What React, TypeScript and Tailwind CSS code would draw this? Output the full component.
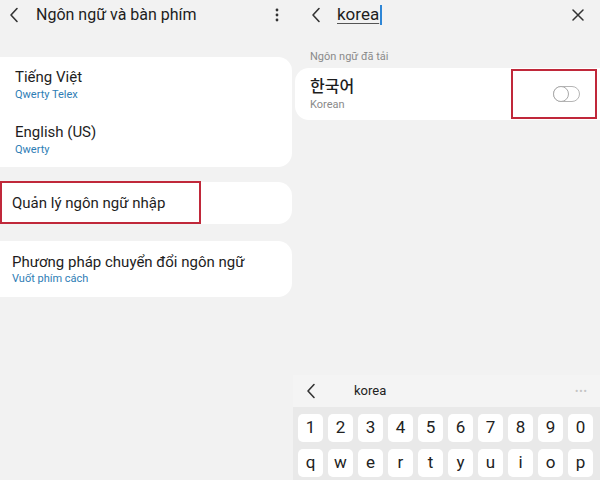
import React from 'react';

const font = { fontFamily: 'Roboto, "Noto Sans", "Noto Sans CJK KR", sans-serif' };

function Chevron({ className = '' }: { className?: string }) {
    return (
        <svg className={className} width="10" height="16" viewBox="0 0 10 16" fill="none" stroke="#333" strokeWidth="1.6" strokeLinecap="round" strokeLinejoin="round">
            <path d="M8 1.5L2 8l6 6.5" />
        </svg>
    );
}

function Toggle() {
    return (
        <div className="relative w-[27px] h-[16px] rounded-full border border-[#b5b5b5]">
            <div className="absolute -left-px -top-px w-[16px] h-[16px] rounded-full border border-[#a9a9a9] bg-white" />
        </div>
    );
}

const numbers = ['1', '2', '3', '4', '5', '6', '7', '8', '9', '0'];
const letters = ['q', 'w', 'e', 'r', 't', 'y', 'u', 'i', 'o', 'p'];

function Key({ label }: { label: string }) {
    return (
        <div className="w-[25px] h-[28px] rounded-[5px] bg-white flex items-center justify-center text-[17px] text-[#222]">
            {label}
        </div>
    );
}

export default function App() {
    return (
        <div className="w-[600px] h-[480px] bg-[#f2f2f2] flex overflow-hidden text-[#1d1d1d]" style={font}>
            {/* Left: language & keyboard settings */}
            <div className="w-[293px] flex flex-col">
                <div className="h-[30px] flex items-center pl-[9px] pr-[14px]">
                    <Chevron />
                    <span className="ml-[17px] text-[16px] flex-1">Ngôn ngữ và bàn phím</span>
                    <svg width="4" height="14" viewBox="0 0 4 14" fill="#333">
                        <circle cx="2" cy="2" r="1.4" />
                        <circle cx="2" cy="7" r="1.4" />
                        <circle cx="2" cy="12" r="1.4" />
                    </svg>
                </div>

                <div className="mt-[27px] w-[292px] bg-white rounded-r-[14px]">
                    <div className="h-[55px] pl-[15px] flex flex-col justify-center">
                        <span className="text-[15px] leading-[18px]">Tiếng Việt</span>
                        <span className="text-[11px] leading-[14px] text-[#2e7db5] mt-[2px]">Qwerty Telex</span>
                    </div>
                    <div className="h-[55px] pl-[15px] flex flex-col justify-center">
                        <span className="text-[15px] leading-[18px]">English (US)</span>
                        <span className="text-[11px] leading-[14px] text-[#2e7db5] mt-[2px]">Qwerty</span>
                    </div>
                </div>

                <div className="relative mt-[15px] w-[292px] h-[42px] bg-white rounded-r-[14px] pl-[12px] flex items-center">
                    <span className="text-[15px] mt-[1px]">Quản lý ngôn ngữ nhập</span>
                    <div className="absolute left-0 -top-px w-[201px] h-[43px] border-2 border-[#c0283a]" />
                </div>

                <div className="mt-[17px] w-[292px] h-[56px] bg-white rounded-r-[14px] pl-[12px] flex flex-col justify-center">
                    <span className="text-[15px] leading-[18px]">Phương pháp chuyển đổi ngôn ngữ</span>
                    <span className="text-[11px] leading-[14px] text-[#2e7db5] mt-[1px]">Vuốt phím cách</span>
                </div>
            </div>

            {/* Right: language search */}
            <div className="flex-1 flex flex-col">
                <div className="h-[30px] flex items-center pl-[18px] pr-[16px]">
                    <Chevron />
                    <div className="ml-[16px] flex-1 flex items-center">
                        <span className="text-[17px] underline underline-offset-[3px] decoration-[#555]">korea</span>
                        <span className="w-[1.5px] h-[20px] bg-[#2e86d6] ml-[1px]" />
                    </div>
                    <svg width="12" height="12" viewBox="0 0 12 12" stroke="#333" strokeWidth="1.5" strokeLinecap="round">
                        <path d="M1 1l10 10M11 1L1 11" />
                    </svg>
                </div>

                <div className="mt-[20px] pl-[17px] text-[11px] text-[#8a8a8a] h-[14px] leading-[14px]">Ngôn ngữ đã tải</div>

                <div className="relative mt-[4px] ml-[2px] h-[52px] bg-white rounded-l-[14px] pl-[15px] pr-[20px] flex items-center justify-between">
                    <div className="flex flex-col">
                        <span className="text-[16px] leading-[19px] font-medium">한국어</span>
                        <span className="text-[11px] leading-[14px] text-[#8a8a8a] mt-[2px]">Korean</span>
                    </div>
                    <Toggle />
                    <div className="absolute left-[216px] top-px w-[86px] h-[50px] border-2 border-[#c0283a]" />
                </div>

                <div className="flex-1" />

                <div className="h-[32px] bg-[#f4f4f4] flex items-center pl-[13px] pr-[12px]">
                    <Chevron />
                    <span className="ml-[38px] text-[13px] text-[#222] flex-1">korea</span>
                    <span className="text-[10px] text-[#c4c4c4] tracking-[1px]">•••</span>
                </div>
                <div className="h-[73px] bg-[#e9e9e9] pl-[5px] pt-[7px] flex flex-col gap-[7px]">
                    <div className="flex gap-[5px]">
                        {numbers.map((k) => <Key key={k} label={k} />)}
                    </div>
                    <div className="flex gap-[5px]">
                        {letters.map((k) => <Key key={k} label={k} />)}
                    </div>
                </div>
            </div>
        </div>
    );
}
